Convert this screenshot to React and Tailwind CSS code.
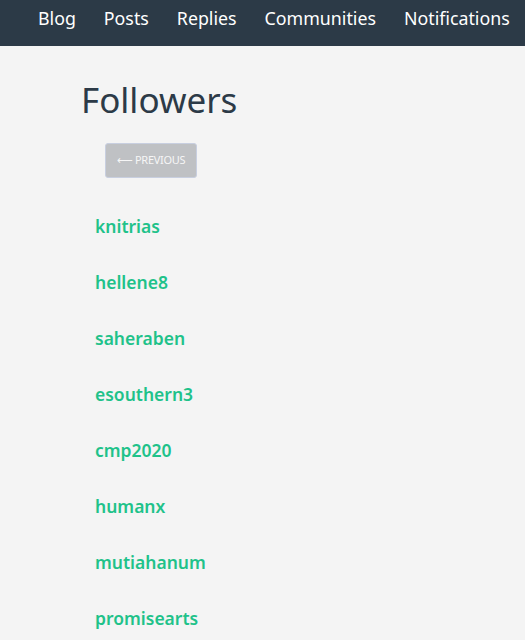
const navItems = ["Blog", "Posts", "Replies", "Communities", "Notifications"];

const followers = [
  "knitrias",
  "hellene8",
  "saheraben",
  "esouthern3",
  "cmp2020",
  "humanx",
  "mutiahanum",
  "promisearts",
];

export default function App() {
  return (
    <div className="min-h-screen bg-[#f4f4f4] font-['Noto_Sans',sans-serif] overflow-hidden">
      <nav className="h-[46px] bg-[#2c3a47] flex items-center pb-[10px] pl-[24px] whitespace-nowrap">
        {navItems.map((item) => (
          <a key={item} href="#" className="px-[14px] text-[17.8px] text-white">
            {item}
          </a>
        ))}
      </nav>

      <main className="pl-[81px] pt-[32px]">
        <h1 className="text-[35px] leading-[44px] text-[#2c3a47]">Followers</h1>
        <div className="pl-[24px] pt-[21px]">
          <button className="h-[35px] w-[92px] rounded-[3px] bg-[#bfc1c4] border border-[#c8cfe0] text-[11px] text-[#f6f6f6] tracking-tight">
            ⟵ PREVIOUS
          </button>
        </div>
        <ul className="pl-[14px] pt-[20px]">
          {followers.map((name) => (
            <li key={name} className="h-[56px] flex items-center">
              <a href="#" className="text-[17.5px] font-semibold text-[#1fc28a]">
                {name}
              </a>
            </li>
          ))}
        </ul>
      </main>
    </div>
  );
}
